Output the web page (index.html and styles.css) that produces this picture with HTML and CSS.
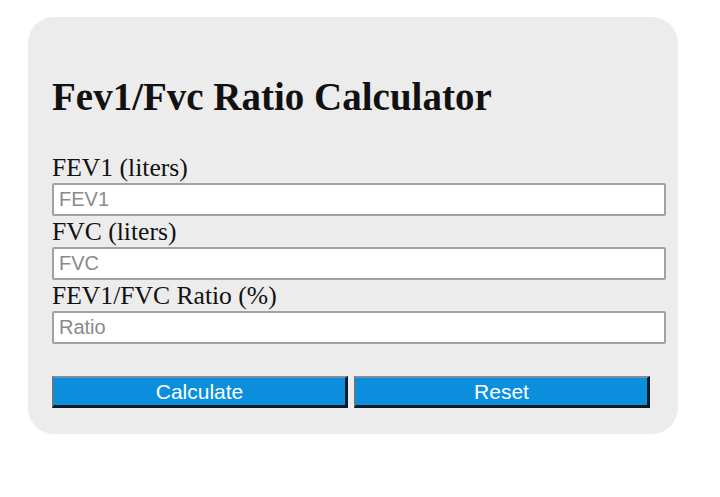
FILE: index.html
```html
<!DOCTYPE html>
<html lang="en">
<head>
    <meta charset="UTF-8">
    <title>Fev1/Fvc Ratio Calculator</title>
    <link rel="stylesheet" href="styles.css">
</head>
<body>
<div class="calc">
    <h1>Fev1/Fvc Ratio Calculator</h1>
    <form class="calc-form" onsubmit="return false;">
        <label for="fev1">FEV1 (liters)</label>
        <input type="text" id="fev1" placeholder="FEV1">
        <label for="fvc">FVC (liters)</label>
        <input type="text" id="fvc" placeholder="FVC">
        <label for="ratio">FEV1/FVC Ratio (%)</label>
        <input type="text" id="ratio" placeholder="Ratio">
        <div class="btns">
            <button type="button" id="calc">Calculate</button>
            <button type="reset">Reset</button>
        </div>
    </form>
</div>
<script>
    // fill in whichever of the three values is missing
    document.getElementById("calc").onclick = function () {
        var fev1 = parseFloat(document.getElementById("fev1").value);
        var fvc = parseFloat(document.getElementById("fvc").value);
        var ratio = parseFloat(document.getElementById("ratio").value);
        if (!isNaN(fev1) && !isNaN(fvc) && fvc != 0) {
            document.getElementById("ratio").value = (fev1 / fvc * 100).toFixed(2);
        } else if (!isNaN(fev1) && !isNaN(ratio) && ratio != 0) {
            document.getElementById("fvc").value = (fev1 / (ratio / 100)).toFixed(2);
        } else if (!isNaN(fvc) && !isNaN(ratio)) {
            document.getElementById("fev1").value = (fvc * ratio / 100).toFixed(2);
        }
    };
</script>
</body>
</html>
```

FILE: styles.css
```css
* {
    padding: 0;
    margin: 0;
    box-sizing: border-box;
}

body {
    background: #fff;
    font-family: "Liberation Serif", "Times New Roman", serif;
    color: #111;
}

.calc {
    width: 650px;
    margin: 17px 0 0 28px;
    padding: 58px 12px 26px 24px;
    background: #ececec;
    border-radius: 26px;
}

.calc h1 {
    font-size: 39px;
    line-height: 44px;
    font-weight: bold;
    margin-bottom: 33px;
}

.calc-form label {
    display: block;
    font-size: 25.6px;
    line-height: 31px;
}

.calc-form input {
    display: block;
    width: 614px;
    height: 33px;
    padding: 0 5px;
    border: 2px solid #a2a2a2;
    border-radius: 2px;
    background: #fff;
    font-family: "Liberation Sans", Arial, sans-serif;
    font-size: 20px;
    color: #333;
}

.calc-form input::placeholder {
    color: #8a8a8a;
}

.btns {
    display: flex;
    gap: 6px;
    margin-top: 32px;
}

.btns button {
    width: 296px;
    height: 32px;
    background: #0b8fdd;
    color: #fff;
    border-top: 2px solid #7d8f9e;
    border-left: 2px solid #5a7a92;
    border-right: 3px solid #0c1a26;
    border-bottom: 3px solid #0c1a26;
    font-family: "Liberation Sans", Arial, sans-serif;
    font-size: 21px;
    line-height: 26px;
    cursor: pointer;
}
```
